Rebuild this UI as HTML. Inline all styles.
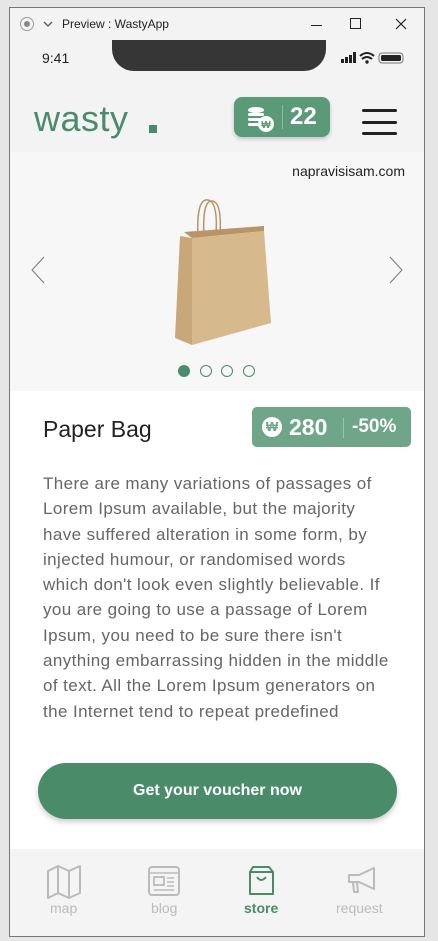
<!DOCTYPE html>
<html><head><meta charset="utf-8"><style>
*{margin:0;padding:0;box-sizing:border-box}
body{width:438px;height:941px;background:#e6e6e6;font-family:"Liberation Sans",sans-serif;position:relative;overflow:hidden}
.win{position:absolute;left:9px;top:7px;width:416px;height:930px;background:#f3f3f3;border:1px solid #777;overflow:hidden}
.abs{position:absolute}
</style></head><body>
<div class="win">
 <div class="abs" style="left:10px;top:9px;width:14px;height:14px;border:1px solid #999;border-radius:50%"></div>
 <div class="abs" style="left:14px;top:13px;width:6px;height:6px;background:#888;border-radius:50%"></div>
 <svg class="abs" style="left:33px;top:12px" width="10" height="8"><path d="M1 2 L5 6 L9 2" stroke="#555" fill="none" stroke-width="1.3"/></svg>
 <div class="abs" style="left:52px;top:9px;font-size:12px;color:#222">Preview : WastyApp</div>
 <div class="abs" style="left:301px;top:17px;width:11px;height:1px;background:#222"></div>
 <div class="abs" style="left:340px;top:10px;width:11px;height:11px;border:1px solid #222"></div>
 <svg class="abs" style="left:385px;top:10px" width="12" height="12"><path d="M1 1L11 11M11 1L1 11" stroke="#222" stroke-width="1.2"/></svg>
 <div class="abs" style="left:102px;top:32px;width:214px;height:31px;background:#363636;border-radius:0 0 22px 22px"></div>
 <div class="abs" style="left:32px;top:42px;font-size:14px;color:#222">9:41</div>
 <svg class="abs" style="left:331px;top:43px" width="74" height="14">
  <rect x="0" y="8" width="3" height="4" fill="#222"/><rect x="4" y="6" width="3" height="6" fill="#222"/><rect x="8" y="4" width="3" height="8" fill="#222"/><rect x="12" y="1" width="3" height="11" fill="#222"/>
  <path d="M19 5 Q26 -1 33 5 M21 8 Q26 4 31 8" stroke="#222" stroke-width="2" fill="none"/><circle cx="26" cy="11" r="1.7" fill="#222"/>
  <rect x="38" y="2" width="24" height="10" rx="3" fill="none" stroke="#777"/><rect x="40" y="4" width="20" height="6" rx="1.5" fill="#222"/>
 </svg>
 <div class="abs" style="left:24px;top:90px;font-size:36px;color:#4a8c6a;letter-spacing:0.5px">wasty</div>
 <div class="abs" style="left:139px;top:117px;width:8px;height:8px;background:#4a8c6a"></div>
 <div class="abs" style="left:224px;top:89px;width:96px;height:40px;background:#5a9a78;border-radius:8px;box-shadow:0 2px 4px rgba(0,0,0,.2)"></div>
 <svg class="abs" style="left:234px;top:97px" width="40" height="28">
  <ellipse cx="12" cy="5" rx="8" ry="3" fill="#fff"/><rect x="4" y="8" width="16" height="3" rx="1.5" fill="#fff"/><rect x="4" y="13" width="14" height="3" rx="1.5" fill="#fff"/><rect x="4" y="18" width="12" height="3" rx="1.5" fill="#fff"/>
  <circle cx="22" cy="19" r="8" fill="#fff"/><text x="22" y="23" font-size="10" font-weight="bold" fill="#5a9a78" text-anchor="middle" font-family="Liberation Sans">₩</text>
 </svg>
 <div class="abs" style="left:272px;top:97px;width:1px;height:24px;background:#8dbba2"></div>
 <div class="abs" style="left:280px;top:95px;font-size:24px;font-weight:bold;color:#fff">22</div>
 <div class="abs" style="left:352px;top:101px;width:35px;height:3px;background:#222;border-radius:2px"></div>
 <div class="abs" style="left:352px;top:113px;width:35px;height:3px;background:#222;border-radius:2px"></div>
 <div class="abs" style="left:352px;top:124px;width:35px;height:3px;background:#222;border-radius:2px"></div>
 <div class="abs" style="left:0;top:144px;width:416px;height:239px;background:#f7f7f7;box-shadow:0 2px 3px rgba(0,0,0,.05)"></div>
 <div class="abs" style="right:19px;top:155px;font-size:14px;color:#222">napravisisam.com</div>
 <svg class="abs" style="left:20px;top:248px" width="16" height="30"><path d="M14 1 L2 14 L14 27" stroke="#777" fill="none"/></svg>
 <svg class="abs" style="left:378px;top:248px" width="16" height="30"><path d="M2 1 L14 14 L2 27" stroke="#777" fill="none"/></svg>
 <svg class="abs" style="left:160px;top:190px" width="110" height="150">
  <path d="M28 40 Q26 0 38 2 Q48 4 46 36 M34 40 Q32 2 42 3 Q52 4 50 36" stroke="#b8946a" stroke-width="1.5" fill="none"/>
  <polygon points="10,38 22,40 22,147 5,140" fill="#c8a779"/>
  <polygon points="22,40 94,33 94,28 14,34" fill="#b89466"/>
  <polygon points="22,40 94,33 101,125 22,147" fill="#d6b98d"/>
 </svg>
 <div class="abs" style="left:168px;top:357px;width:12px;height:12px;background:#4a8c6a;border-radius:50%"></div>
 <div class="abs" style="left:190px;top:357px;width:12px;height:12px;border:1px solid #4a8c6a;border-radius:50%"></div>
 <div class="abs" style="left:211px;top:357px;width:12px;height:12px;border:1px solid #4a8c6a;border-radius:50%"></div>
 <div class="abs" style="left:233px;top:357px;width:12px;height:12px;border:1px solid #4a8c6a;border-radius:50%"></div>
 <div class="abs" style="left:0;top:383px;width:416px;height:458px;background:#fff"></div>
 <div class="abs" style="left:33px;top:408px;font-size:23px;color:#222">Paper Bag</div>
 <div class="abs" style="left:242px;top:399px;width:159px;height:40px;background:#6fa589;border-radius:5px"></div>
 <div class="abs" style="left:252px;top:409px;width:20px;height:20px;background:#fff;border-radius:50%;color:#6fa589;font-size:13px;font-weight:bold;text-align:center;line-height:20px">₩</div>
 <div class="abs" style="left:279px;top:406px;font-size:23px;font-weight:bold;color:#fff">280</div>
 <div class="abs" style="left:333px;top:410px;width:1px;height:20px;background:#9cc4ad"></div>
 <div class="abs" style="left:342px;top:408px;font-size:19px;font-weight:bold;color:#fff">-50%</div>
 <div class="abs" style="left:33px;top:463px;white-space:nowrap;font-size:17px;line-height:25.3px;color:#666;letter-spacing:0.4px">There are many variations of passages of<br>Lorem Ipsum available, but the majority<br>have suffered alteration in some form, by<br>injected humour, or randomised words<br>which don't look even slightly believable. If<br>you are going to use a passage of Lorem<br>Ipsum, you need to be sure there isn't<br>anything embarrassing hidden in the middle<br>of text. All the Lorem Ipsum generators on<br>the Internet tend to repeat predefined</div>
 <div class="abs" style="left:28px;top:755px;width:359px;height:56px;background:#4a8c6a;border-radius:28px;box-shadow:0 3px 6px rgba(0,0,0,.2);color:#fff;font-size:16px;font-weight:bold;text-align:center;line-height:56px">Get your voucher now</div>
 <div class="abs" style="left:0;top:841px;width:416px;height:89px;background:#f4f4f4"></div>
 <svg class="abs" style="left:36px;top:857px" width="40" height="36"><path d="M2 6 L12 1 L23 6 L34 1 L34 28 L23 33 L12 28 L2 33 Z M12 1 L12 28 M23 6 L23 33" stroke="#bbb" stroke-width="2" fill="none" stroke-linejoin="round"/></svg>
 <svg class="abs" style="left:137px;top:857px" width="36" height="32"><rect x="2" y="2" width="30" height="28" rx="3" stroke="#bbb" stroke-width="2" fill="none"/><path d="M2 8 H32" stroke="#bbb" stroke-width="1.5"/><rect x="7" y="12" width="10" height="8" stroke="#bbb" stroke-width="1.8" fill="none"/><path d="M20 13 H27 M20 17 H27 M20 21 H27 M7 25 H27" stroke="#bbb" stroke-width="1.5"/></svg>
 <svg class="abs" style="left:237px;top:857px" width="32" height="32"><path d="M3 7 L6 2 H22 L26 7 V29 H3 Z M3 7 H26" stroke="#4a8c6a" stroke-width="2" fill="none" stroke-linejoin="round"/><path d="M10 12 Q14 18 19 12" stroke="#4a8c6a" stroke-width="2" fill="none"/></svg>
 <svg class="abs" style="left:336px;top:858px" width="36" height="30"><path d="M3 9 H13 L28 2 V23 L13 16 H3 Z M7 16 L8 26 H12 L11 16" stroke="#bbb" stroke-width="2" fill="none" stroke-linejoin="round"/></svg>
 <div class="abs" style="left:40px;top:892px;font-size:14px;color:#bbb">map</div>
 <div class="abs" style="left:141px;top:892px;font-size:14px;color:#bbb">blog</div>
 <div class="abs" style="left:234px;top:892px;font-size:14px;color:#4a8c6a;font-weight:bold">store</div>
 <div class="abs" style="left:326px;top:892px;font-size:14px;color:#bbb">request</div>
</div>
</body></html>
